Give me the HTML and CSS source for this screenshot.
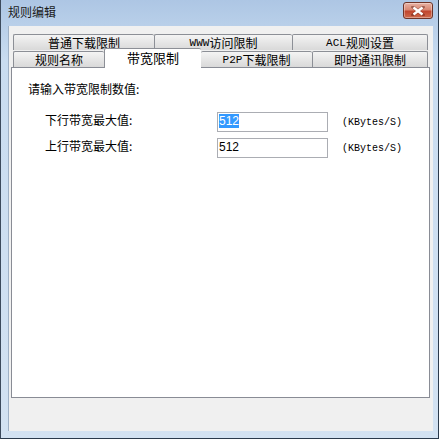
FILE: index.html
```html
<!DOCTYPE html>
<html lang="zh-CN">
<head>
  <meta charset="UTF-8" />
  <title>规则编辑</title>
  <link rel="stylesheet" href="styles.css">
</head>
<body>
  <div class="window">
    <div class="titlebar">
      <span class="title">规则编辑</span>
      <div class="close">
        <svg width="14" height="10" viewBox="0 0 14 10">
          <path d="M2 1 L12 9 M12 1 L2 9" stroke="#5a1a10" stroke-width="3.4" stroke-linecap="square" opacity="0.45"/>
          <path d="M2.5 1.5 L11.5 8.5 M11.5 1.5 L2.5 8.5" stroke="#fff" stroke-width="2.4"/>
        </svg>
      </div>
    </div>
    <div class="body">
      <div class="client">
        <div class="tabs">
          <div class="tab-row back">
            <div class="tab">普通下载限制</div>
            <div class="tab"><span class="latin">WWW</span>访问限制</div>
            <div class="tab"><span class="latin">ACL</span>规则设置</div>
          </div>
          <div class="tab-row front">
            <div class="tab">规则名称</div>
            <div class="tab selected">带宽限制</div>
            <div class="tab"><span class="latin">P2P</span>下载限制</div>
            <div class="tab">即时通讯限制</div>
          </div>
        </div>
        <div class="panel">
          <div class="prompt">请输入带宽限制数值:</div>
          <div class="field">
            <span class="label">下行带宽最大值:</span>
            <div class="input"><span class="sel">512</span></div>
            <span class="unit">(KBytes/S)</span>
          </div>
          <div class="field">
            <span class="label">上行带宽最大值:</span>
            <div class="input">512</div>
            <span class="unit">(KBytes/S)</span>
          </div>
        </div>
      </div>
    </div>
  </div>
</body>
</html>
```

FILE: styles.css
```css
* {
  margin: 0;
  padding: 0;
  box-sizing: border-box;
}
body {
  background: #f0f0f0;
  font-family: "Noto Sans CJK SC", "Liberation Sans", sans-serif;
  font-size: 12px;
  color: #000;
}
.window {
  width: 439px;
  height: 439px;
  border-left: 1px solid #3c4a5c;
  border-right: 1px solid #2b3a4c;
  border-bottom: 1px solid #2b3a4c;
  background: linear-gradient(#adc6e4, #c9dcf0 60px, #d3e2f2);
  display: flex;
  flex-direction: column;
}
.titlebar {
  height: 26px;
  display: flex;
  align-items: center;
  justify-content: space-between;
  padding: 0 5px 0 7px;
}
.title {
  color: #1a1a1a;
  font-size: 12px;
  line-height: 1;
  margin-top: -2px;
}
.close {
  width: 30px;
  height: 17px;
  margin-top: -5px;
  border: 1px solid #6e3428;
  border-radius: 3px;
  background: linear-gradient(#e8b2a4, #d98873 45%, #c1462e 55%, #cf6a4c);
  box-shadow: inset 0 0 0 1px rgba(255, 255, 255, 0.35);
  display: flex;
  align-items: center;
  justify-content: center;
}
.body {
  flex: 1;
  padding: 0 6px 7px 7px;
  display: flex;
}
.client {
  flex: 1;
  background: #f0f0f0;
  border-left: 1px solid #9fb1c6;
  padding: 8px 3px 33px 2px;
  display: flex;
  flex-direction: column;
}
.tabs {
  padding: 0 2px 0 2px;
}
.tab-row {
  display: flex;
  height: 16px;
}
.tab-row.front {
  height: 17px;
  align-items: flex-end;
}
.tab {
  height: 16px;
  border: 1px solid #8c8f96;
  border-bottom: none;
  border-right: none;
  border-radius: 2px 2px 0 0;
  background: linear-gradient(#f4f4f4, #e6e6e6 50%, #d9d9d9);
  display: flex;
  align-items: center;
  justify-content: center;
  font-size: 12px;
  line-height: 1;
  padding-top: 1px;
  white-space: nowrap;
}
.tab:last-child {
  border-right: 1px solid #8c8f96;
}
.back .tab:nth-child(1) { width: 141px; }
.back .tab:nth-child(2) { width: 138px; }
.back .tab:nth-child(3) { width: 136px; }
.front .tab:nth-child(1) { width: 91px; }
.front .tab:nth-child(2) { width: 97px; }
.front .tab:nth-child(3) { width: 111px; }
.front .tab:nth-child(4) { width: 116px; }
.tab.selected {
  height: 20px;
  margin-top: -3px;
  margin-bottom: -1px;
  background: #fff;
  font-size: 13px;
  padding-bottom: 4px;
  position: relative;
  z-index: 1;
}
.tab.selected + .tab {
  border-left: none;
}
.latin {
  font-family: "Liberation Mono", monospace;
  font-size: 11px;
}
.panel {
  flex: 1;
  background: #fff;
  border: 1px solid #898c95;
  padding: 14px 0 0 16px;
}
.prompt {
  line-height: 14px;
  margin-bottom: 16px;
}
.field {
  display: flex;
  align-items: center;
  height: 20px;
  margin-bottom: 6px;
}
.label {
  width: 189px;
  padding-left: 17px;
  line-height: 1;
  margin-top: -4px;
}
.input {
  width: 111px;
  height: 20px;
  border: 1px solid #abadb3;
  border-left-color: #e2e3ea;
  border-right-color: #dbdfe6;
  border-bottom-color: #e3e9ef;
  outline: 1px solid #abadb3;
  outline-offset: -1px;
  font-family: "Liberation Sans", sans-serif;
  font-size: 12px;
  line-height: 17px;
  padding-left: 1px;
}
.sel {
  background: #3399ff;
  color: #fff;
  display: inline-block;
  line-height: 14px;
}
.unit {
  margin-left: 14px;
  font-family: "Liberation Mono", monospace;
  font-size: 10px;
}
```
